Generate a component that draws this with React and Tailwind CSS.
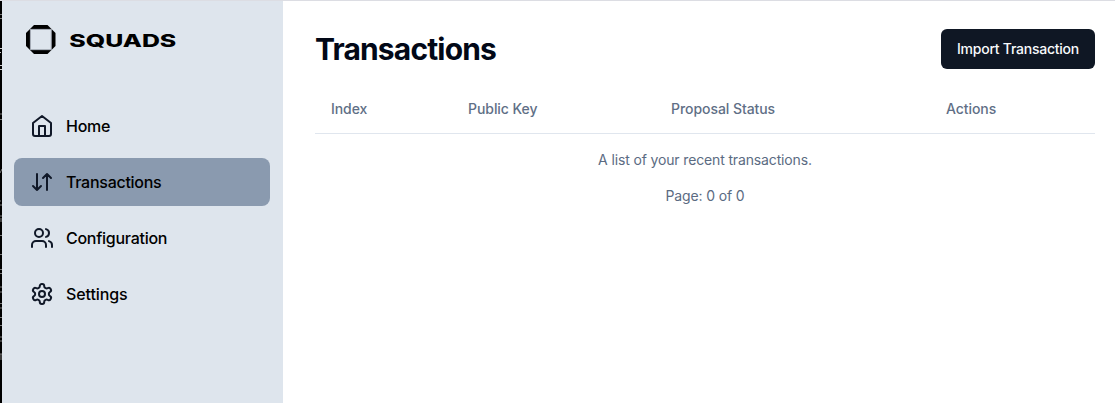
import React from "react";

const line = {
  width: 24,
  height: 24,
  viewBox: "0 0 24 24",
  fill: "none",
  stroke: "currentColor",
  strokeWidth: 2,
  strokeLinecap: "round",
  strokeLinejoin: "round",
};

const HomeIcon = () => (
  <svg {...line}>
    <path d="m3 9 9-7 9 7v11a2 2 0 0 1-2 2H5a2 2 0 0 1-2-2ZM9 22V12h6v10" />
  </svg>
);

const ArrowsIcon = () => (
  <svg {...line}>
    <path d="m3 16 4 4 4-4M7 20V4M21 8l-4-4-4 4M17 4v16" />
  </svg>
);

const UsersIcon = () => (
  <svg {...line}>
    <path d="M16 21v-2a4 4 0 0 0-4-4H6a4 4 0 0 0-4 4v2M22 21v-2a4 4 0 0 0-3-3.87M16 3.13a4 4 0 0 1 0 7.75" />
    <circle cx="9" cy="7" r="4" />
  </svg>
);

const SettingsIcon = () => (
  <svg {...line}>
    <path d="M12.220 2h-.44a2 2 0 0 0-2 2v.18a2 2 0 0 1-1 1.730l-.43.25a2 2 0 0 1-2 0l-.15-.08a2 2 0 0 0-2.730.730l-.22.38a2 2 0 0 0 .73 2.730l.15.1a2 2 0 0 1 1 1.720v.51a2 2 0 0 1-1 1.740l-.15.09a2 2 0 0 0-.73 2.730l.22.38a2 2 0 0 0 2.730.730l.15-.08a2 2 0 0 1 2 0l.43.25a2 2 0 0 1 1 1.730V20a2 2 0 0 0 2 2h.44a2 2 0 0 0 2-2v-.18a2 2 0 0 1 1-1.730l.43-.25a2 2 0 0 1 2 0l.15.08a2 2 0 0 0 2.730-.730l.22-.39a2 2 0 0 0-.73-2.730l-.15-.08a2 2 0 0 1-1-1.740v-.5a2 2 0 0 1 1-1.740l.15-.09a2 2 0 0 0 .73-2.730l-.22-.38a2 2 0 0 0-2.730-.730l-.15.08a2 2 0 0 1-2 0l-.43-.25a2 2 0 0 1-1-1.730V4a2 2 0 0 0-2-2z" />
    <circle cx="12" cy="12" r="3" />
  </svg>
);

const items = [
  { label: "Home", icon: <HomeIcon /> },
  { label: "Transactions", icon: <ArrowsIcon />, active: true },
  { label: "Configuration", icon: <UsersIcon /> },
  { label: "Settings", icon: <SettingsIcon /> },
];

function Logo() {
  return (
    <svg width="160" height="40" viewBox="0 0 160 40" className="block">
      <path
        fillRule="evenodd"
        d="M8 5h13.500l8 8v13l-8 8H8l-8-8V13ZM4 9v21h21.500V9Z"
      />
      <path d="M4.300 9.300h21v20.500h-21Z" fill="#dee5ed" stroke="#777d86" strokeWidth=".7" />
      <text
        x="43.300"
        y="26.900"
        textLength="107"
        lengthAdjust="spacingAndGlyphs"
        className="font-['Inter'] text-[17.5px] font-extrabold"
      >
        SQUADS
      </text>
    </svg>
  );
}

function EdgeStrip() {
  return (
    <svg width="2" height="402" viewBox="0 1 2 402" className="block shrink-0 bg-black">
      <path
        d="M0 14.500h2M0 18.500h2M0 114h2M0 119.500h2M0 173l2-4M0 201h1M0 205h2M0 216h2M1 218v4M0 235.500h2M0 254.500h2M0 269.500h2M0 273.500h2M0 287h2M0 292h2M0 303.500h2M0 308h2M0 317.500h2M0 325.500h2M0 337h2M0 341h2M0 354h2M1 354v6"
        stroke="#777"
        strokeWidth="1"
      />
      <path d="M0 48.500h2M0 52.500h1M0 65.500h2M0 69.500h2" stroke="#ccc" strokeWidth="1" />
    </svg>
  );
}

export default function App() {
  return (
    <div className="flex h-[403px] w-[1115px] overflow-hidden border-t border-[#dcdde3] bg-white font-['Inter',sans-serif] text-[#020817]">
      <EdgeStrip />
      <aside className="w-[281px] shrink-0 bg-[#dee5ed] px-3 pt-[19px] text-black">
        <div className="pl-3">
          <Logo />
        </div>
        <nav className="mt-[42px] flex flex-col gap-2">
          {items.map((item) => (
            <a
              key={item.label}
              className={
                item.active
                  ? "flex h-12 w-64 items-center gap-3 rounded-lg bg-[#8a9aaf] px-4"
                  : "flex h-12 w-64 items-center gap-3 rounded-lg px-4"
              }
            >
              <span className="text-[#101828]">{item.icon}</span>
              <span
                className={
                  item.label === "Settings"
                    ? "text-base font-medium tracking-[-0.1px]"
                    : "text-base font-medium tracking-[-0.27px]"
                }
              >
                {item.label}
              </span>
            </a>
          ))}
        </nav>
      </aside>
      <main className="flex-1 pt-7 pr-5 pl-8">
        <div className="flex h-10 items-center justify-between">
          <h1 className="text-3xl font-bold tracking-[-0.84px]">Transactions</h1>
          <button className="h-10 w-[154px] rounded-md bg-[#0f1724] text-sm font-medium tracking-[-0.24px] whitespace-nowrap text-[#f8fafc]">
            Import Transaction
          </button>
        </div>
        <div className="mt-4 grid h-[49px] grid-cols-[137px_203px_275px_1fr] items-center border-b border-[#e0e6ee] text-sm font-medium tracking-[-0.06px] text-[#5f6f86]">
          <div className="pl-4">Index</div>
          <div className="pl-4">Public Key</div>
          <div className="pl-4">Proposal Status</div>
          <div className="pl-4">Actions</div>
        </div>
        <p className="mt-4 text-center text-sm tracking-[-0.14px] text-[#5b6b82]">
          A list of your recent transactions.
        </p>
        <p className="mt-4 text-center text-sm tracking-[-0.14px] text-[#5b6b82]">Page: 0 of 0</p>
      </main>
    </div>
  );
}
